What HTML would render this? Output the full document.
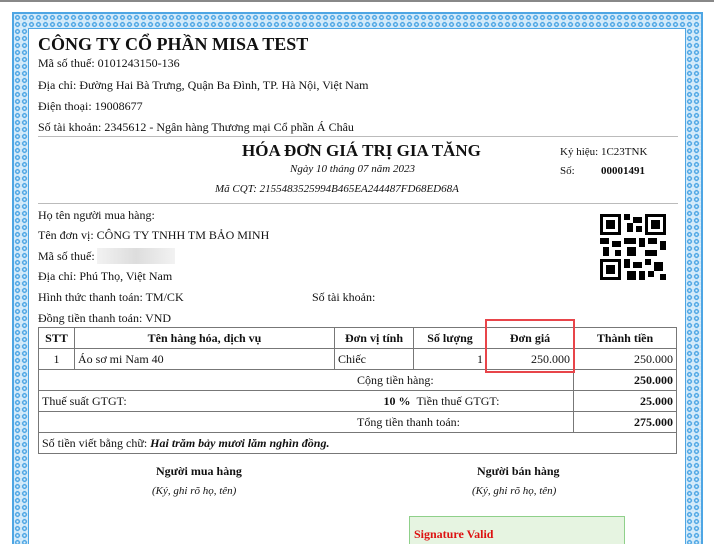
<!DOCTYPE html>
<html><head><meta charset="utf-8"><style>
*{margin:0;padding:0;box-sizing:border-box}
html,body{width:714px;height:544px;overflow:hidden}
body{background:#fff;font-family:"Liberation Serif",serif;color:#111;position:relative}
.topbar{position:absolute;left:0;top:0;width:714px;height:2px;background:#888}
.frame{position:absolute;left:12px;top:12px;width:691px;height:532px;border:2px solid #4ea6e4;border-bottom:none;
background:repeating-radial-gradient(circle at 3.5px 3.5px,#dff0fb 0 1px,#4ea6e4 1.2px 2.4px,#c9e5f8 2.5px 3.5px);background-size:7px 7px}
.inner{position:absolute;left:28px;top:28px;width:658px;height:516px;background:#fff;border:1px solid #4ea6e4;border-bottom:none}
.t{position:absolute;white-space:nowrap;font-size:12px}
.b{font-weight:bold}.i{font-style:italic}
.hr{position:absolute;left:38px;width:640px;height:1px;background:#bbb}
table{position:absolute;left:38px;top:327px;width:639px;border-collapse:collapse;font-size:12px}
td{border:1px solid #777;height:21px;padding:0 3px}
th{border:1px solid #777;height:21px;font-weight:bold}
.r{text-align:right}.c{text-align:center}
</style></head><body>
<div class="topbar"></div>
<div class="frame"></div>
<div class="inner"></div>
<div class="t b" style="left:38px;top:34px;font-size:18px">CÔNG TY CỔ PHẦN MISA TEST</div>
<div class="t" style="left:38px;top:56px">Mã số thuế: 0101243150-136</div>
<div class="t" style="left:38px;top:78px">Địa chỉ: Đường Hai Bà Trưng, Quận Ba Đình, TP. Hà Nội, Việt Nam</div>
<div class="t" style="left:38px;top:99px">Điện thoại: 19008677</div>
<div class="t" style="left:38px;top:120px">Số tài khoản: 2345612 - Ngân hàng Thương mại Cổ phần Á Châu</div>
<div class="hr" style="top:136px"></div>
<div class="t b" style="left:242px;top:141px;font-size:17px">HÓA ĐƠN GIÁ TRỊ GIA TĂNG</div>
<div class="t i" style="left:290px;top:163px;font-size:11px">Ngày 10 tháng 07 năm 2023</div>
<div class="t i" style="left:215px;top:183px;font-size:11px">Mã CQT: 2155483525994B465EA244487FD68ED68A</div>
<div class="t" style="left:560px;top:146px;font-size:11px">Ký hiệu: 1C23TNK</div>
<div class="t" style="left:560px;top:165px;font-size:11px">Số:</div>
<div class="t b" style="left:601px;top:165px;font-size:11px">00001491</div>
<div class="hr" style="top:203px"></div>
<div class="t" style="left:38px;top:208px">Họ tên người mua hàng:</div>
<div class="t" style="left:38px;top:228px">Tên đơn vị: CÔNG TY TNHH TM BẢO MINH</div>
<div class="t" style="left:38px;top:249px">Mã số thuế:</div>
<div style="position:absolute;left:97px;top:248px;width:78px;height:16px;background:linear-gradient(90deg,#f2f2f2,#ddd,#f2f2f2)"></div>
<div class="t" style="left:38px;top:269px">Địa chỉ: Phú Thọ, Việt Nam</div>
<div class="t" style="left:38px;top:290px">Hình thức thanh toán: TM/CK</div>
<div class="t" style="left:312px;top:290px">Số tài khoản:</div>
<div class="t" style="left:38px;top:311px">Đồng tiền thanh toán: VND</div>
<svg style="position:absolute;left:600px;top:214px" width="66" height="66" viewBox="0 0 22 22">
<rect width="22" height="22" fill="#fff"/>
<g fill="#000">
<rect x="0" y="0" width="7" height="7"/><rect x="1" y="1" width="5" height="5" fill="#fff"/><rect x="2" y="2" width="3" height="3"/>
<rect x="15" y="0" width="7" height="7"/><rect x="16" y="1" width="5" height="5" fill="#fff"/><rect x="17" y="2" width="3" height="3"/>
<rect x="0" y="15" width="7" height="7"/><rect x="1" y="16" width="5" height="5" fill="#fff"/><rect x="2" y="17" width="3" height="3"/>
<rect x="8" y="0" width="2" height="2"/><rect x="11" y="1" width="3" height="2"/><rect x="9" y="3" width="2" height="3"/><rect x="12" y="4" width="2" height="2"/>
<rect x="0" y="8" width="3" height="2"/><rect x="4" y="9" width="3" height="2"/><rect x="8" y="8" width="4" height="2"/><rect x="13" y="8" width="2" height="3"/><rect x="16" y="8" width="3" height="2"/><rect x="20" y="9" width="2" height="3"/>
<rect x="1" y="11" width="2" height="3"/><rect x="5" y="12" width="2" height="2"/><rect x="9" y="11" width="3" height="3"/><rect x="15" y="12" width="4" height="2"/>
<rect x="8" y="15" width="2" height="3"/><rect x="11" y="16" width="3" height="2"/><rect x="15" y="15" width="2" height="2"/><rect x="18" y="16" width="3" height="3"/>
<rect x="9" y="19" width="3" height="3"/><rect x="13" y="19" width="2" height="3"/><rect x="16" y="19" width="2" height="2"/><rect x="20" y="20" width="2" height="2"/>
</g></svg>
<table>
<tr><th style="width:36px">STT</th><th style="width:260px">Tên hàng hóa, dịch vụ</th><th style="width:79px">Đơn vị tính</th><th style="width:73px">Số lượng</th><th style="width:87px">Đơn giá</th><th>Thành tiền</th></tr>
<tr><td class="c">1</td><td>Áo sơ mi Nam 40</td><td>Chiếc</td><td class="r">1</td><td class="r">250.000</td><td class="r">250.000</td></tr>
<tr><td colspan="5" style="padding-left:318px">Cộng tiền hàng:</td><td class="r b">250.000</td></tr>
<tr><td colspan="3" style="border-right:none">Thuế suất GTGT:<span class="b" style="float:right">10 %</span></td><td colspan="2" style="border-left:none">Tiền thuế GTGT:</td><td class="r b">25.000</td></tr>
<tr><td colspan="5" style="padding-left:318px">Tổng tiền thanh toán:</td><td class="r b">275.000</td></tr>
<tr><td colspan="6">Số tiền viết bằng chữ: <b><i>Hai trăm bảy mươi lăm nghìn đồng.</i></b></td></tr>
</table>
<div style="position:absolute;left:485px;top:319px;width:90px;height:54px;border:2px solid #e8454a"></div>
<div class="t b" style="left:156px;top:464px">Người mua hàng</div>
<div class="t i" style="left:152px;top:485px;font-size:11px">(Ký, ghi rõ họ, tên)</div>
<div class="t b" style="left:477px;top:464px">Người bán hàng</div>
<div class="t i" style="left:472px;top:485px;font-size:11px">(Ký, ghi rõ họ, tên)</div>
<div style="position:absolute;left:409px;top:516px;width:216px;height:28px;background:#e6f4e1;border:1px solid #8fd08a;border-bottom:none"></div>
<div class="t b" style="left:414px;top:527px;color:#d11;font-size:12px">Signature Valid</div>
</body></html>
